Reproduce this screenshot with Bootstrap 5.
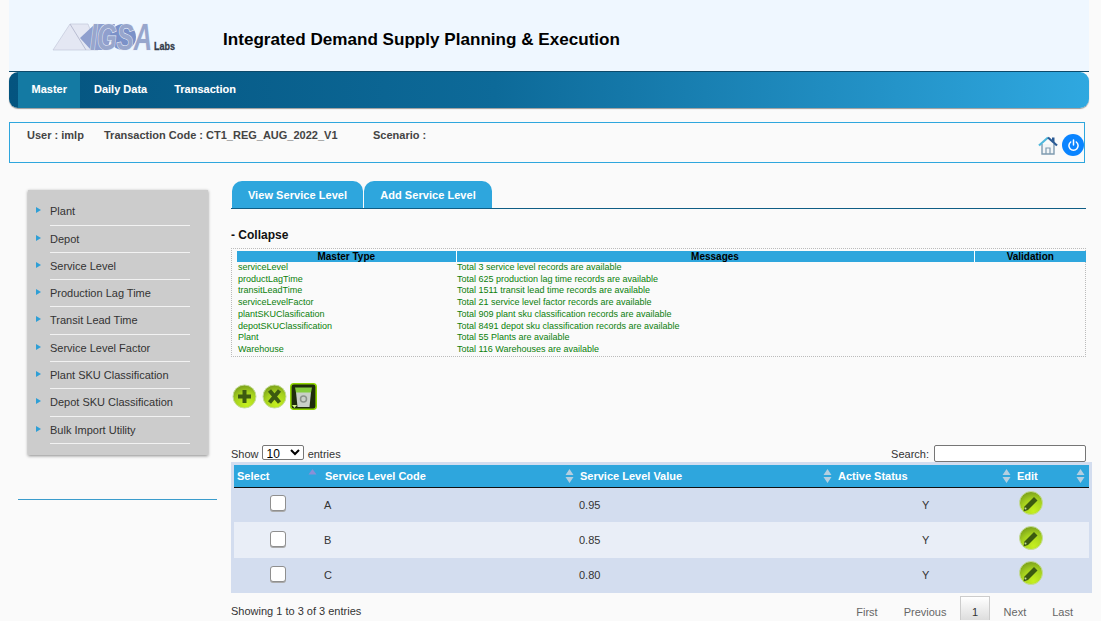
<!DOCTYPE html>
<html lang="en"><head><meta charset="utf-8"><title>Service Level</title>
<link rel="stylesheet" href="https://cdn.jsdelivr.net/npm/bootstrap@5.3.0/dist/css/bootstrap.min.css">
<style>
html,body{height:621px;overflow:hidden}
body{background:#fafafa;font-family:"Liberation Sans",Arial,sans-serif;font-size:11px;color:#333}
.app-wrap{padding:0 12px 0 9px;width:1101px}
.top-head{height:72px;background:#eff7ff;border-bottom:1px solid #0d4a6b;width:1080px;padding-left:44px;gap:40px}
.logo-art{width:130px;height:32px;margin-top:2px;overflow:visible}
.logo-word{paint-order:stroke;stroke:#e8eefa;stroke-width:1.2px}
.app-title{font-size:17.1px;font-weight:700;color:#000;margin:0;line-height:1;position:relative;top:4px}
.main-bar{height:36px;width:1080px;background:linear-gradient(90deg,#04547f 0,#0d6a99 45%,#2fa8e0 100%);border-radius:9px;padding-left:9px;box-shadow:0 1px 1px #999}
.main-bar a{color:#fff;font-weight:700;font-size:11px;text-decoration:none;padding:0 13.5px;line-height:35px;height:36px;display:block;text-shadow:0 0 1px #fff3}
.main-bar a.on{background:#147aa3}
.info-box{width:1076px;height:41px;margin-top:14px;border:1px solid #2ea6dd;padding:6px 17px;font-weight:700;color:#444;position:relative}
.info-box span{line-height:12px}
.tool-icons{position:absolute;right:0;top:11px;display:flex;align-items:center;gap:4px}
.pw{width:22px;height:22px;border-radius:50%;background:#0a84ff;display:flex;align-items:center;justify-content:center}
.body-row{margin-top:18px}
.left-col{width:222px;flex:none;padding-left:9px}
.side-menu{width:180px;height:265px;margin:9px 0 0 10px;background:#ccc;box-shadow:0 1px 3px #888;padding:8.3px 0 0 8px;list-style:none}
.side-menu li{height:27.3px;position:relative;padding-left:14px;color:#333;line-height:26px;font-size:11px}
.side-menu li:before{content:"";position:absolute;left:0;top:9px;border-left:5px solid #2e9fd6;border-top:3px solid transparent;border-bottom:3px solid transparent}
.side-menu li:after{content:"";position:absolute;left:14px;width:140px;bottom:0;top:auto;height:1px;background:#f2f2f2}
.side-rule{width:199px;border-top:1px solid #3a9ccc;margin:44px 0 0 0}
.main-col{width:861px;flex:none}
.tab-row{width:855px;height:28px;border-bottom:1px solid #0f5d85;gap:1px;padding-left:1px}
.tab-item{background:#2ea6dd;color:#fff;font-weight:700;height:27px;line-height:28px;border-radius:10px 10px 0 0;font-size:11px;text-align:center;letter-spacing:.05px}
.collapse-h{font-size:12px;font-weight:700;color:#111;margin:19px 0 6px;line-height:14px}
.msg-box{width:855px;height:109px;border:1px dotted #bbb;padding:2px 0 0 5px}
.msg-table{width:849px;table-layout:fixed;border-collapse:collapse;font-size:9px;line-height:11.7px;color:#0a800a}
.msg-table th{background:#2ea6dd;color:#000;text-align:center;font-weight:700;font-size:10px;border-left:1px solid #fff;line-height:11px;padding:0}
.msg-table td{padding:0 0 0 1px;height:11.7px}
.msg-table th:first-child{border-left:0}
.act-row{margin-top:24px;height:30px;align-items:center;padding-left:1px}
.act-row .act-gap{margin-right:5px}
.act-row .act-gap2{margin-right:3px}
.dt-top{width:855px;margin-top:34px;height:17px;color:#333}
.dt-top select{width:42px;height:15px;font-size:12px;padding:0;font-family:inherit;background:#fff;border:1px solid #767676;border-radius:2px;margin:0 1px 0 0}
.dt-top input{width:152px;height:17px;border:1px solid #767676;border-radius:2px;margin-left:5px;background:#fff}
.dt-shell{width:861px;background:#d3ddef;padding:3px;height:131px}
.dt-table{width:855px;table-layout:fixed;border-collapse:collapse;font-size:11px;color:#333}
.dt-table th{background:#2ea6dd;color:#fff;height:22px;border-bottom:1px solid #111;padding:0 0 0 3px;position:relative;font-weight:700}
.dt-table td{height:35.4px;padding:0}
.dt-table td.cell-a{padding-left:3px}
.dt-table td.cell-b{padding-left:2px}
.dt-table td.cell-c{padding-left:88px}
.dt-table tr.alt td{background:#e9eef7}
.sorter{position:absolute;top:4px;width:9px;height:14px}
.check-fake{width:16px;height:16px;background:#fff;border:1px solid #8f8f8f;border-radius:3px;display:block;margin:-3px auto 0 36px;box-shadow:0 1px 0 #aaa}
.edit-ic{display:block;margin:-4px 0 0 5px}
.dt-foot{width:855px;margin-top:3px;height:28px;color:#333}
.pg-nav{align-items:flex-start;color:#666}
.pg-nav span{padding:0 13px;line-height:32px;font-size:11px}
.pg-nav .cur{background:linear-gradient(#fff,#ddd);border:1px solid #ccc;border-bottom:0;padding:0 10.5px;margin:0 1px;height:24px;line-height:31px;color:#333}
</style></head>
<body>
<div class="app-wrap">
 <header class="top-head d-flex align-items-center">
  <svg class="logo-art" viewBox="0 0 130 32" role="img" aria-label="IGSA Labs">
   <path d="M0 29 L17 3 L35 3 L45 29Z" fill="#e4e7f3" stroke="#c3c7da" stroke-width=".7"/>
   <path d="M17 3 L33 29" stroke="#b9bdd2" fill="none"/>
   <path d="M27 17 L42 3 L62 3 L54 29 L38 29Z" fill="#8f9fce"/>
   <circle cx="70" cy="16" r="13" fill="#7b91c8"/>
   <text class="logo-word" x="37" y="29" font-family="Liberation Sans" font-size="36" font-weight="700" font-style="italic" fill="#98a6cc" textLength="62" lengthAdjust="spacingAndGlyphs">IGSA</text>
   <text x="101" y="29" font-family="Liberation Sans" font-size="11" font-weight="700" fill="#333a48" stroke="#333a48" stroke-width=".3" textLength="21" lengthAdjust="spacingAndGlyphs">Labs</text>
  </svg>
  <h1 class="app-title">Integrated Demand Supply Planning &amp; Execution</h1>
 </header>
 <nav class="main-bar d-flex">
  <a class="on" href="#">Master</a><a href="#">Daily Data</a><a href="#">Transaction</a>
 </nav>
 <div class="info-box d-flex">
  <span style="width:77px">User : imlp</span><span style="width:269px">Transaction Code : CT1_REG_AUG_2022_V1</span><span>Scenario :</span>
  <div class="tool-icons">
   <svg width="20" height="19" viewBox="0 0 20 19"><path d="M4 8v10h12V8" fill="#f2f5f7" stroke="#7f9bb0" stroke-width="1.400"/><path d="M8 18v-6h4v6" fill="none" stroke="#7f9bb0" stroke-width="1.200"/><path d="M14 4V1.500h2.500V7" fill="#2a5a94"/><path d="M1 9.500 10 1.500" fill="none" stroke="#4fb7dc" stroke-width="2.200"/><path d="M10 1.500l9 8" fill="none" stroke="#2a5a94" stroke-width="2.200"/></svg>
   <div class="pw"><svg width="13" height="13" viewBox="0 0 13 13" fill="none" stroke="#fff" stroke-width="1.500" stroke-linecap="round"><path d="M6.500 1v5"/><path d="M3.700 3a4.600 4.600 0 1 0 5.600 0"/></svg></div>
  </div>
 </div>
 <div class="body-row d-flex">
  <aside class="left-col">
   <ul class="side-menu">
    <li>Plant</li><li>Depot</li><li>Service Level</li><li>Production Lag Time</li><li>Transit Lead Time</li><li>Service Level Factor</li><li>Plant SKU Classification</li><li>Depot SKU Classification</li><li>Bulk Import Utility</li>
   </ul>
   <div class="side-rule"></div>
  </aside>
  <main class="main-col">
   <div class="tab-row d-flex">
    <div class="tab-item" style="width:131px">View Service Level</div>
    <div class="tab-item" style="width:128px">Add Service Level</div>
   </div>
   <div class="collapse-h">- Collapse</div>
   <div class="msg-box">
    <table class="msg-table">
     <colgroup><col style="width:219px"><col style="width:518px"><col></colgroup>
     <tr><th>Master Type</th><th>Messages</th><th>Validation</th></tr>
     <tr><td>serviceLevel</td><td>Total 3 service level records are available</td><td></td></tr>
     <tr><td>productLagTime</td><td>Total 625 production lag time records are available</td><td></td></tr>
     <tr><td>transitLeadTime</td><td>Total 1511 transit lead time records are available</td><td></td></tr>
     <tr><td>serviceLevelFactor</td><td>Total 21 service level factor records are available</td><td></td></tr>
     <tr><td>plantSKUClasification</td><td>Total 909 plant sku classification records are available</td><td></td></tr>
     <tr><td>depotSKUClassification</td><td>Total 8491 depot sku classification records are available</td><td></td></tr>
     <tr><td>Plant</td><td>Total 55 Plants are available</td><td></td></tr>
     <tr><td>Warehouse</td><td>Total 116 Warehouses are available</td><td></td></tr>
    </table>
   </div>
   <div class="act-row d-flex">
    <svg width="25" height="25" viewBox="0 0 25 25" class="act-gap"><defs><radialGradient id="gg" cx=".6" cy=".85" r=".85"><stop offset="0" stop-color="#c6f01e"/><stop offset=".6" stop-color="#a6d21e"/><stop offset="1" stop-color="#7ba01a"/></radialGradient></defs><circle cx="12.500" cy="12.500" r="11.500" fill="url(#gg)" stroke="#c5dc9a"/><path d="M12.500 6v13M6 12.500h13" stroke="#3c5a10" stroke-width="4"/></svg>
    <svg width="25" height="25" viewBox="0 0 25 25" class="act-gap2"><circle cx="12.500" cy="12.500" r="11.500" fill="url(#gg)" stroke="#c5dc9a"/><path d="M7.500 6.500l10 12M17.500 6.500l-10 12" stroke="#3c5a10" stroke-width="4"/></svg>
    <svg width="27" height="27" viewBox="0 0 27 27"><rect x=".8" y=".8" width="25.400" height="25.400" rx="3" fill="#1f2d0c" stroke="#8ed400" stroke-width="1.600"/><path d="M6 9h15l-1.500 15h-12z" fill="#c9d0c8"/><path d="M5 4.500h17l-1 5H6z" fill="#84cc3c"/><circle cx="13.500" cy="16" r="3" fill="none" stroke="#8b938b" stroke-width="1.500"/><path d="M2 22h5l-2.500 3z" fill="#d5f28a"/></svg>
   </div>
   <div class="dt-top d-flex justify-content-between align-items-center">
    <div>Show <select aria-label="entries"><option>10</option></select> entries</div>
    <div>Search:<input type="text" aria-label="Search"></div>
   </div>
   <div class="dt-shell">
    <table class="dt-table">
     <colgroup><col style="width:87px"><col style="width:256px"><col style="width:257px"><col style="width:179px"><col></colgroup>
     <thead><tr>
      <th>Select<svg class="sorter" style="right:4px" viewBox="0 0 9 14"><path d="M4.500 0l4 5.500h-8z" fill="#8a8fd6"/></svg></th>
      <th style="padding-left:4px">Service Level Code<svg class="sorter" style="right:3px" viewBox="0 0 9 14"><path d="M4.500 0l4 6h-8zM4.500 14l4-6h-8z" fill="#b5cfe0"/></svg></th>
      <th style="padding-left:3px">Service Level Value<svg class="sorter" style="right:2px" viewBox="0 0 9 14"><path d="M4.500 0l4 6h-8zM4.500 14l4-6h-8z" fill="#b5cfe0"/></svg></th>
      <th style="padding-left:4px">Active Status<svg class="sorter" style="right:2px" viewBox="0 0 9 14"><path d="M4.500 0l4 6h-8zM4.500 14l4-6h-8z" fill="#b5cfe0"/></svg></th>
      <th style="padding-left:4px">Edit<svg class="sorter" style="right:4px" viewBox="0 0 9 14"><path d="M4.500 0l4 6h-8zM4.500 14l4-6h-8z" fill="#b5cfe0"/></svg></th>
     </tr></thead>
     <tbody>
      <tr><td><span class="check-fake"></span></td><td class="cell-a">A</td><td class="cell-b">0.95</td><td class="cell-c">Y</td><td><svg width="26" height="26" viewBox="0 0 26 26" class="edit-ic"><use href="#pen"/></svg></td></tr>
      <tr class="alt"><td><span class="check-fake"></span></td><td class="cell-a">B</td><td class="cell-b">0.85</td><td class="cell-c">Y</td><td><svg width="26" height="26" viewBox="0 0 26 26" class="edit-ic"><use href="#pen"/></svg></td></tr>
      <tr><td><span class="check-fake"></span></td><td class="cell-a">C</td><td class="cell-b">0.80</td><td class="cell-c">Y</td><td><svg width="26" height="26" viewBox="0 0 26 26" class="edit-ic"><use href="#pen"/></svg></td></tr>
     </tbody>
    </table>
   </div>
   <div class="dt-foot d-flex justify-content-between">
    <div style="line-height:31px">Showing 1 to 3 of 3 entries</div>
    <div class="pg-nav d-flex"><span>First</span><span>Previous</span><span class="cur">1</span><span>Next</span><span>Last</span></div>
   </div>
  </main>
 </div>
</div>
<svg width="0" height="0" style="position:absolute"><defs><g id="pen"><circle cx="13" cy="13" r="11.500" fill="url(#gg)" stroke="#c5dc9a"/><path d="M6.500 16.500 16 7l3.500 3.500L10 20l-4.500 1.500z" fill="#3c5a10"/><circle cx="7.500" cy="18.500" r="1" fill="#c5dc9a"/></g></defs></svg>
<script src="https://cdn.jsdelivr.net/npm/bootstrap@5.3.0/dist/js/bootstrap.bundle.min.js"></script>
</body></html>
